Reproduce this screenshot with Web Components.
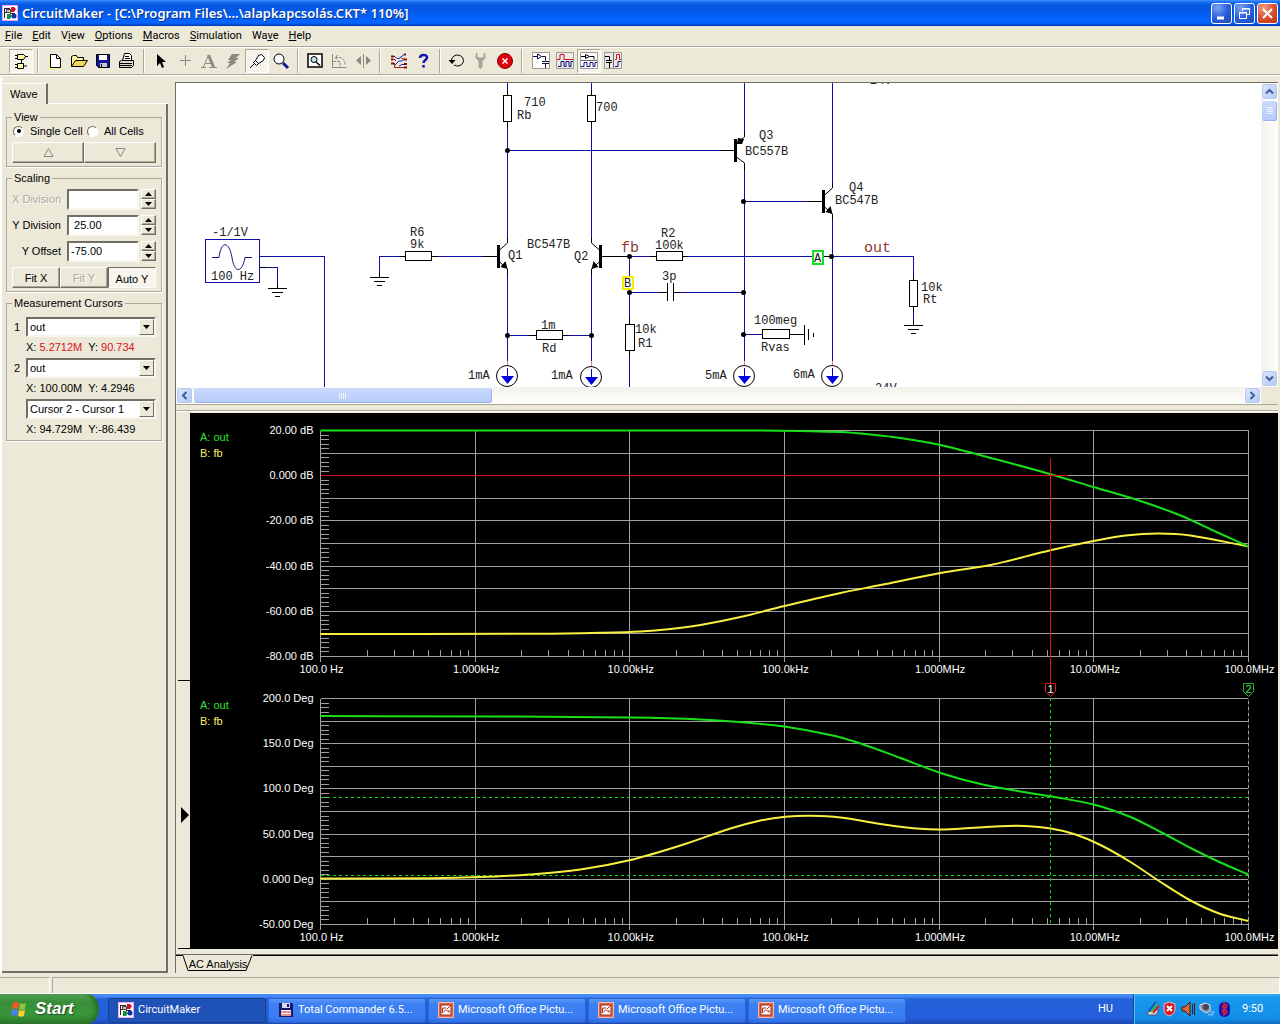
<!DOCTYPE html>
<html lang="en">
<head>
<meta charset="utf-8">
<title>CircuitMaker</title>
<style>
html, body { margin: 0; height: 100%; }
body {
  --face: #ece9d8; --shade: #aca899; --dark: #716f64; --lite: #fff;
  --ui: "Liberation Sans", Arial, sans-serif;
  --tahoma: Roboto, "Open Sans", sans-serif;
  background: #ece9d8; font: 11px/14px "Liberation Sans", Arial, sans-serif; color: #000; overflow: hidden;
}
</style>
</head>
<body>
<app-window></app-window>
<script>
const define = (name, html, setup) => {
  const tpl = document.createElement('template');
  tpl.innerHTML = html;
  customElements.define(name, class extends HTMLElement {
    constructor() { super(); this.attachShadow({ mode: 'open' }).append(tpl.content.cloneNode(true)); }
    connectedCallback() { if (setup && !this.ready) { this.ready = true; setup(this, this.shadowRoot); } }
  });
};

const LOGO = `<svg width="16" height="16" viewBox="0 0 16 16"><rect x=".5" y=".5" width="15" height="15" fill="#fff" stroke="#f6a6e6"/><path d="M2.500 3v10M2 3.500h6M2 7.500h3M5 13.500h3" fill="none" stroke="#222"/><path d="M4.500 4.500h4v3h-4z" fill="#c8c8c8" stroke="#444"/><path d="M9 2h3l2 2-2 3H9z" fill="#d01030"/><path d="M5 9h3l2 2-2 3H5z" fill="#109040"/><circle cx="12" cy="11" r="2.500" fill="#1030a0"/><path d="M8 8.500h5" stroke="#222"/></svg>`;

/* ---------- title bar ---------- */
define('caption-button', `<style>
:host{display:block}
button{display:grid;place-items:center;box-sizing:border-box;width:21px;height:21px;padding:0;border:1px solid #fff;border-radius:3px;background:radial-gradient(circle at 30% 20%,#7ea4f4,#2a5fdc 50%,#1b49b8)}
:host([kind=close]) button{background:radial-gradient(circle at 30% 20%,#f0a088,#dc5030 50%,#b83410)}
::slotted(svg){display:block}
</style><button type="button"><slot></slot></button>`, (h, r) => r.querySelector('button').setAttribute('aria-label', h.getAttribute('kind')));

define('title-bar', `<style>
:host{display:flex;align-items:center;gap:4px;height:26px;padding:0 2px;box-sizing:border-box;background:linear-gradient(#3c96ff,#1a6ef2 2px,#0457e0 5px,#0458e6 10px,#0462fa 18px,#0566ff 23px,#0046c8 25px,#003ab0)}
h1{flex:1;margin:0;font:600 13px/20px "Noto Sans","Open Sans",sans-serif;color:#fff;text-shadow:1px 1px 0 #0a2f84;white-space:nowrap}
div{display:flex;gap:2px}
svg{display:block}
</style>${LOGO}<h1><slot></slot></h1><div>
<caption-button kind="minimize"><svg width="17" height="17"><path d="M4 13h7" stroke="#fff" stroke-width="3"/></svg></caption-button>
<caption-button kind="restore"><svg width="17" height="17" fill="none" stroke="#fff"><path d="M6.500 6V3.500h7v6H11M6 4h8M3.500 7.500h7v6h-7zM3 8h8"/></svg></caption-button>
<caption-button kind="close"><svg width="17" height="17"><path d="M4 4l9 9M13 4l-9 9" stroke="#fff" stroke-width="2"/></svg></caption-button></div>`);

/* ---------- menu ---------- */
define('menu-bar', `<style>
:host{display:block;border-bottom:1px solid var(--shade)}
nav{display:flex;gap:10px;height:20px;padding:0 5px;align-items:center}
button{border:0;background:none;padding:0;font:11px/16px var(--tahoma);color:#000}
u{text-underline-offset:1px}
</style><nav><button><u>F</u>ile</button><button><u>E</u>dit</button><button>V<u>i</u>ew</button><button><u>O</u>ptions</button><button><u>M</u>acros</button><button><u>S</u>imulation</button><button>Wa<u>v</u>e</button><button><u>H</u>elp</button></nav>`);

/* ---------- tool bar ---------- */
define('tool-button', `<style>
:host{display:block}
button{display:grid;place-items:center;box-sizing:border-box;width:24px;height:24px;padding:0;border:1px solid transparent;background:none}
:host([pressed]) button{border-color:var(--shade) #fff #fff var(--shade);background:#f6f4ec}
::slotted(svg){display:block}
</style><button type="button"><slot></slot></button>`, (h, r) => r.querySelector('button').setAttribute('aria-label', h.getAttribute('name')));

const ic = (name, body, pressed = '') => `<tool-button name="${name}" ${pressed}><svg width="20" height="20" viewBox="0 0 20 20" fill="none" stroke="#000">${body}</svg></tool-button>`;
const sep = '<i></i>';
define('tool-bar', `<style>
:host{display:flex;align-items:center;height:26px;padding:0 9px;border-top:1px solid #fff;border-bottom:1px solid var(--shade);box-shadow:0 1px #fff}
i{width:1px;height:24px;margin:0 5px 0 4px;background:var(--shade);box-shadow:1px 0 #fff;flex:none}
i.wide{margin-right:7px}
svg{display:block}
</style>`
+ ic('Digital', `<path d="M6.500 3.500h6l2 2-2 3h-6zM6.500 12.500h6v5h-6z" fill="#fff9a8"/><path d="M4 4.500h3M4 7.500h3M14 5.500h3M4 13.500h3M4 16.500h3M12 15h4M10.500 9v3"/>`, 'pressed') + sep
+ ic('New', `<path d="M5.500 3.500h6l4 4v9h-10z" fill="#fff"/><path d="M11.500 3.500v4h4"/><path d="M3.500 5v12.500h12" stroke="#f8f480"/>`)
+ ic('Open', `<path d="M2.500 15.500v-10l2-1h3l1 2h6v3" fill="#fff59a"/><path d="M2.500 15.500l4-6h12l-4 6z" fill="#efd95a"/>`)
+ ic('Save', `<path d="M3.500 3.500h13v13h-11l-2-2z" fill="#1414a0"/><path d="M6 4h8v5H6z" fill="#fff" stroke="none"/><path d="M7 12h7v4H7z" fill="#c8c8c8" stroke="none"/><path d="M8.500 13v3"/>`)
+ ic('Print', `<path d="M5.500 9.500l2-7h5l2 2v5" fill="#fff"/><path d="M8 5.500h4M8 7.500h5"/><path d="M2.500 10.500l2-1h12v5l-2 2h-12z" fill="#d8d5c8"/><path d="M2 12.500h13M2 14.500h13"/>`) + sep
+ ic('Select', `<path d="M6 3l9 8H11l2 5-2 1-2-5-3 3z" fill="#000" stroke="none"/>`)
+ ic('Wire', `<path d="M10.500 4v11M5 9.500h11" stroke="#8c8a80"/>`)
+ ic('Text', `<path d="M2 16.500h5M10 16.500h8M4.500 16l5-12M6.500 12.500h6" stroke="#8c8a80"/><path d="M9.500 4l5 12" stroke="#8c8a80" stroke-width="3"/>`)
+ ic('Delete', `<path d="M9 3h8l-4 4h3L11 11h3L3 18l4-6H4l4-3H5z" fill="#8c8a80" stroke="none"/>`)
+ ic('Probe', `<path d="M8.500 9.500l3-5 3-1 3 3-1 3-5 3z" fill="#fff"/><path d="M3 17l5-5M6.500 11.500l2-2 3 3-2 2z"/>`, 'pressed')
+ ic('Zoom', `<circle cx="8" cy="8" r="5" fill="#f8fbff"/><path d="M12 12l5 5" stroke="#1414a0" stroke-width="3"/>`) + sep
+ ic('Fit', `<path d="M3 3h14v13H3z" fill="#fff" stroke-width="1.500"/><circle cx="9" cy="8.500" r="3" fill="#bfe0e0"/><path d="M11 11l4 3.500" stroke-width="1.500"/>`)
+ ic('Rotate', `<path d="M3.500 3v13.500h14" stroke="#8c8a80"/><path d="M6 6.500h4c4 0 6 3 6 7M9 4L6 6.500 9 9M4 10.500h7v6" stroke="#8c8a80" stroke-dasharray="3 1"/>`)
+ ic('Mirror', `<path d="M10.500 3v14" stroke="#8c8a80"/><path d="M8 5v9L3 9.500zM13 5v9l5-4.500z" fill="#8c8a80" stroke="none"/>`) + '<i class="wide"></i>'
+ ic('Netlist', `<path d="M3 5.500h3l2 2h2l5-4h2M6 14l4-4h3l2-1.500h2M10 15l3-1.500h4" stroke="#2020c0"/><path d="M3 8.500h3l1 1.500M3 12.500h3M5.500 12v4.500H17M12 7l4 1.500" stroke="#b01818"/><path d="M2 5.500h3M2 8.500h2M2 12.500h3M15 3.500h2M15 8.500h3M15 13h3M15 16.500h3" stroke="#801010" stroke-width="2"/>`)
+ ic('Help', `<path d="M7 7c0-4 7-4 7-.500C14 9 10.500 9 10.500 12M10.500 14v2.500" stroke="#1414b8" stroke-width="2.500"/>`) + sep
+ ic('Undo', `<path d="M4.500 9a6 5.500 0 1 1 2.500 5"/><path d="M1.500 9h7L5 13z" fill="#000" stroke="none"/>`)
+ ic('Options', `<path d="M6 2L5 4v3l3 3v6l1.500 1.500L11 16v-6l3-3V4l-1-2v4l-2 1H8L6 6z" fill="#a8a598" stroke="#a8a598"/>`)
+ ic('Stop', `<circle cx="10" cy="10" r="7.500" fill="#e00010" stroke="#800"/><path d="M7.500 7.500l5 5M12.500 7.500l-5 5" stroke="#fff" stroke-width="1.500"/>`) + '<i class="wide"></i>'
+ ic('Schematic', `<path d="M1.500 1.500h17v16h-17z" fill="#fff" stroke="#999"/><path d="M2 5.500h4M6.500 3v5l4-2.500zM11 5.500h3.500v4M11 10.500h7M11 12.500h7M14.500 13v4" stroke="#101040"/>`)
+ ic('Waveforms', `<path d="M1.500 1.500h17v16h-17z" fill="#ece9e8" stroke="#999"/><path d="M2 8.500h3v-5h4v5h9" stroke="#d01010"/><path d="M3 15.500h3v-5h3v5h2v-5h3v5h2v-5h2" stroke="#101070"/>`)
+ ic('Split horizontal', `<path d="M1.500 1.500h17v16h-17z" fill="#fff" stroke="#999"/><path d="M2 9.500h16" stroke="#666"/><path d="M2 5.500h4M6.500 3.500v4l4-2zM11 5.500h4v3"/><path d="M2 15.500h3v-4h3v4h3v-4h3v4h2v-4h2" stroke="#101070"/>`, 'pressed')
+ ic('Split vertical', `<path d="M1.500 1.500h17v16h-17z" fill="#ece9e8" stroke="#999"/><path d="M10.500 2v15" stroke="#666"/><path d="M2 5.500h4.500v4M3 9.500h6M3 11.500h6M6.500 12v5"/><path d="M12 8.500h1.500v-5h3v5H18" stroke="#d01010"/><path d="M12 15.500h3v-5h3" stroke="#101070"/>`));

/* ---------- side panel ---------- */
const BTN = `button{box-sizing:border-box;padding:0;border:1px solid;border-color:#fff var(--dark) var(--dark) #fff;box-shadow:inset -1px -1px var(--shade);background:var(--face);font:11px/14px var(--ui);color:#000}
button svg{display:block;margin:auto}`;
define('group-box', `<style>
:host{display:block}
fieldset{margin:0;padding:0 5px 3px;min-width:0;border:1px solid var(--shade);box-shadow:1px 1px #fff}
legend{padding:0 2px;font:11px/14px var(--ui)}
</style><fieldset><legend></legend><slot></slot></fieldset>`, (h, r) => r.querySelector('legend').textContent = h.getAttribute('caption'));

define('spin-field', `<style>${BTN}
:host{display:flex;align-items:center;height:20px;margin-bottom:6px}
label{flex:1;min-width:0;text-align:right;padding-right:6px;white-space:nowrap}
:host([disabled]) label{color:var(--shade);text-shadow:1px 1px #fff}
input{flex:none;box-sizing:border-box;width:72px;height:21px;padding:0 2px;border:2px solid;border-color:var(--dark) #f8f7f0 #f8f7f0 var(--dark);background:#fff;font:11px/14px var(--ui)}
div{display:flex;flex:none;flex-direction:column;margin-left:2px}
button{width:15px;height:10px}
</style><label for="v"></label><input id="v" type="text"><div><button type="button" aria-label="increase"><svg width="8" height="4"><path d="M0 4l3.500-4L7 4z"/></svg></button><button type="button" aria-label="decrease"><svg width="8" height="4"><path d="M0 0h7L3.500 4z"/></svg></button></div>`,
(h, r) => { r.querySelector('label').textContent = h.getAttribute('label'); const i = r.querySelector('input'); i.value = h.getAttribute('value') || ''; i.disabled = h.hasAttribute('disabled'); });

define('cursor-readout', `<style>
:host{display:grid;grid-template-columns:14px 1fr}
span.s{position:relative;display:block}
label{padding-left:2px;line-height:20px}
select{appearance:none;width:100%;height:20px;box-sizing:border-box;border:2px solid;border-color:var(--dark) #f8f7f0 #f8f7f0 var(--dark);background:#fff;border-radius:0;padding:0 2px;margin:0;font:11px/14px var(--ui);color:#000;display:block}
b{position:absolute;right:2px;top:2px;width:15px;height:16px;box-sizing:border-box;border:1px solid;border-color:#fff var(--dark) var(--dark) #fff;background:var(--face);display:grid;place-items:center;pointer-events:none}
p{grid-column:2;margin:0;line-height:16px;padding-top:2px;white-space:pre}
:host([hot]) em{color:#d81020}
em{font-style:normal}
</style><label for="c"></label><span class="s"><select id="c"><option></option></select><b><svg width="7" height="4"><path d="M0 0h7L3.500 4z"/></svg></b></span><p>X: <em id="x"></em>  Y:<em id="y"></em></p>`,
(h, r) => {
  const l = r.querySelector('label'), s = r.querySelector('select');
  l.textContent = h.getAttribute('n') || ''; if (!h.hasAttribute('n')) s.setAttribute('aria-label', 'Difference');
  r.querySelector('option').textContent = h.getAttribute('source');
  r.querySelector('#x').textContent = h.getAttribute('x'); r.querySelector('#y').textContent = h.getAttribute('y');
});

define('wave-panel', `<style>${BTN}
:host{display:flex;flex-direction:column;box-sizing:border-box;width:168px;padding-top:6px;border-left:2px solid #fff}
.tabs{display:flex;height:21px}
.tab{width:46px;box-sizing:border-box;padding:3px 0 0 8px;border-right:2px solid var(--dark);border-top:1px solid #fff}
.rest{flex:1;border-bottom:1px solid #fff}
.page{flex:1;display:flex;flex-direction:column;gap:4px;padding:6px 4px 0;border-right:2px solid var(--dark);border-bottom:2px solid var(--dark)}
.radios{display:grid;grid-template-columns:74px 1fr;height:14px;align-items:center;padding:0 0 4px 1px}
.radios label{display:flex;align-items:center;gap:6px;white-space:nowrap}
input[type=radio]{appearance:none;flex:none;margin:0;width:11px;height:11px;box-sizing:border-box;border-radius:50%;border:1px solid;border-color:var(--dark) #fff #fff var(--dark);background:#fff;display:grid;place-items:center}
input[type=radio]:checked::before{content:"";width:4px;height:4px;border-radius:50%;background:#000}
.row{display:flex}
.row button{flex:1;height:21px}
.row button.on{border-color:var(--dark) #fff #fff var(--dark);box-shadow:none;background:#f6f4ec;padding-top:2px}
.row button[disabled]{color:var(--shade);text-shadow:1px 1px #fff}
.fields{padding:4px 0 0}
.cursors{display:flex;flex-direction:column;gap:3px;padding:7px 0 0}
</style><div class="tabs"><div class="tab">Wave</div><div class="rest"></div></div>
<div class="page">
<group-box caption="View"><div class="radios"><label><input type="radio" name="cell" checked>Single Cell</label><label><input type="radio" name="cell">All Cells</label></div>
<div class="row"><button aria-label="Previous"><svg width="11" height="9" fill="none" stroke="#8c8a80"><path d="M1 8.500h9L5.500.500z"/></svg></button><button aria-label="Next"><svg width="11" height="9" fill="none" stroke="#8c8a80"><path d="M1 .500h9l-4.500 8z"/></svg></button></div></group-box>
<group-box caption="Scaling"><div class="fields"><spin-field label="X Division" disabled></spin-field><spin-field label="Y Division" value=" 25.00"></spin-field><spin-field label="Y Offset" value="-75.00"></spin-field></div>
<div class="row"><button>Fit X</button><button disabled>Fit Y</button><button class="on">Auto Y</button></div></group-box>
<group-box caption="Measurement Cursors"><div class="cursors"><cursor-readout n="1" source="out" x="5.2712M" y=" 90.734" hot></cursor-readout><cursor-readout n="2" source="out" x="100.00M" y=" 4.2946"></cursor-readout><cursor-readout source="Cursor 2 - Cursor 1" x="94.729M" y="-86.439"></cursor-readout></div></group-box>
</div>`);

/* ---------- scroll bars ---------- */
define('scroll-bar', `<style>
:host{display:flex;box-sizing:border-box;background:linear-gradient(#f3f1ec,#fefefb)}
:host([dir=v]){flex-direction:column;width:17px;background:linear-gradient(90deg,#f3f1ec,#fefefb)}
:host([dir=h]){height:17px}
button{flex:none;display:grid;place-items:center;box-sizing:border-box;width:17px;height:17px;padding:0;border:1px solid #fff;border-radius:3px;background:linear-gradient(135deg,#dce6fe,#b4c8f6);box-shadow:inset 0 0 0 1px #b8c9f0}
.track{flex:1;display:flex;flex-direction:inherit}
.thumb{display:grid;place-items:center;box-sizing:border-box;border:1px solid #fff;border-radius:3px;background:linear-gradient(#cbdafd,#b6cbfa);box-shadow:inset -1px -1px #98b0e8}
:host([dir=h]) .thumb{width:28.500%}
:host([dir=v]) .thumb{height:22px}
</style><button type="button" aria-label="back"><svg width="9" height="9" fill="none" stroke="#3f5f98" stroke-width="2"></svg></button><div class="track"><div class="thumb"><svg width="8" height="8"></svg></div></div><button type="button" aria-label="forward"><svg width="9" height="9" fill="none" stroke="#3f5f98" stroke-width="2"></svg></button>`,
(h, r) => {
  const s = r.querySelectorAll('svg'), H = h.getAttribute('dir') === 'h';
  s[0].innerHTML = H ? '<path d="M6.500 1L3 4.500 6.500 8"/>' : '<path d="M1 6.500L4.500 3 8 6.500"/>';
  s[2].innerHTML = H ? '<path d="M2.500 1L6 4.500 2.500 8"/>' : '<path d="M1 2.500L4.500 6 8 2.500"/>';
  s[1].innerHTML = H ? '<path d="M.500 1v6M2.500 1v6M4.500 1v6M6.500 1v6" stroke="#eef4fe"/>' : '<path d="M1 .500h6M1 2.500h6M1 4.500h6M1 6.500h6" stroke="#eef4fe"/>';
});

/* ---------- schematic ---------- */
const W = d => `<path class="w" d="${d}"/>`, K = d => `<path class="k" d="${d}"/>`;
const box = (x, y, w, h) => `<rect class="k" x="${x}.5" y="${y}.5" width="${w}" height="${h}" fill="#fff"/>`;
const dot = (x, y) => `<circle cx="${x}.5" cy="${y}.5" r="2.500"/>`;
const T = (x, y, s) => `<text x="${x}" y="${y}">${s}</text>`;
const source = (x, y) => `<path d="M${x}.5 361v5" stroke="#e08080"/><circle cx="${x}" cy="${y}" r="10.500" fill="#fff" stroke="#000"/><path d="M${x}.5 ${y - 8}v8" stroke="#0000e0"/><path d="M${x - 6} ${y}h13l-6.500 8z" fill="#0000e0"/>`;
const gnd = (x, y) => K(`M${x - 9} ${y}.5h19M${x - 5} ${y + 4}.5h11M${x - 2} ${y + 8}.5h5`);
const npn = (x, y, m) => { const d = m ? -1 : 1, bx = x - 9 * d;
  return `<path d="M${bx} ${y - 11}v23" stroke="#000" stroke-width="3"/><path d="M${bx} ${y - 5}L${x} ${y - 13}V${y - 18}M${bx} ${y + 5}L${x} ${y + 13}v6" fill="none" stroke="#000"/><path d="M${x} ${y + 13}L${x - 2 * d} ${y + 5}L${x - 7 * d} ${y + 11}z"/>`; };
define('schematic-view', `<style>
:host{display:block;overflow:hidden;background:#fff;min-width:0}
svg{display:block;width:100%;height:100%}
.w{fill:none;stroke:#1010a8;shape-rendering:crispEdges}
.k{stroke:#000;shape-rendering:crispEdges}
path.k{fill:none}
text{font:12px "Liberation Mono",monospace;fill:#222}
.net text{font-size:15px;fill:#8c3c32}
</style><svg><g transform="translate(-176,-83)">`
+ W('M507.500 83v7M507.500 127v111M507.500 275v86M591.500 83v7M591.500 127v111M591.500 275v86M508 150.500H720M744.500 83v48M744.500 170v191M832.500 83v100M832.500 219v142M744 201.500h63')
+ W('M259 256.500h65.500V387M266 267.500h11.500v16M431 256.500h52M399 256.500h-19.500v16M507 335.500h22M569 335.500h22M629 256.500h21M688 256.500h124M832 256.500h81.500V275M629.500 256v62M629.500 357v30M629 292.500h32M680 292.500h64M744 334.500h18M913.500 313v7')
+ K('M507.500 90v37M591.500 90v37M720 150.500h15M807 201.500h15M259 267.500h7M277.500 283v5M379.500 272v5M399 256.500h39M483 256.500h15M601 256.500h28M529 335.500h40M650 256.500h38M824 256.500h8M913.500 275v38M913.500 320v5M629.500 318v39M661 292.500h6M673 292.500h7M762 334.500h42')
+ box(503, 95, 8, 26) + box(587, 95, 8, 26) + box(405, 251, 26, 9) + box(536, 330, 26, 9) + box(656, 251, 26, 9) + box(909, 280, 8, 26) + box(625, 324, 9, 26) + box(762, 329, 27, 9)
+ `<rect class="w" x="205.500" y="239.500" width="54" height="43"/><path d="M212 257.500h7c2-17 10-17 13 0 2 15 10 17 13 0h7" fill="none" stroke="#14148c"/>`
+ gnd(277, 288) + gnd(379, 277) + gnd(913, 325)
+ K('M667.500 283v18M673.500 283v18M804.500 325v20M808.500 329v11M813.500 333v4')
+ npn(507.500, 256) + npn(591.500, 256, 1) + npn(832.500, 201)
+ `<path d="M735.500 139v23" stroke="#000" stroke-width="3"/><path d="M735 145l9.500-8v-6M735 156l9.500 7v7" fill="none" stroke="#000"/><path d="M737 144l1-6 6 1-2 5z"/>`
+ dot(507, 150) + dot(507, 335) + dot(591, 335) + dot(629, 256) + dot(629, 292) + dot(743, 201) + dot(743, 292) + dot(743, 334) + dot(831, 256)
+ source(507, 376) + source(591, 377) + source(744, 376) + source(832, 376)
+ `<rect x="813" y="251" width="10" height="13" fill="#fff" stroke="#10e020" stroke-width="2"/><rect x="623" y="277" width="10" height="12" fill="#fff" stroke="#f4f000" stroke-width="2"/>`
+ T(814, 262, 'A') + T(624, 287, 'B')
+ T(524, 106, '710') + T(517, 119, 'Rb') + T(596, 111, '700') + T(759, 139, 'Q3') + T(745, 155, 'BC557B') + T(849, 191, 'Q4') + T(835, 204, 'BC547B')
+ T(212, 236, '-1/1V') + T(211, 280, '100 Hz') + T(410, 236, 'R6') + T(410, 248, '9k') + T(508, 259, 'Q1') + T(527, 248, 'BC547B') + T(574, 260, 'Q2')
+ T(661, 237, 'R2') + T(655, 249, '100k') + T(662, 280, '3p') + T(635, 333, '10k') + T(638, 347, 'R1') + T(541, 329, '1m') + T(542, 352, 'Rd')
+ T(754, 324, '100meg') + T(761, 351, 'Rvas') + T(921, 291, '10k') + T(923, 303, 'Rt') + T(468, 379, '1mA') + T(551, 379, '1mA') + T(705, 379, '5mA') + T(793, 378, '6mA')
+ T(870, 84, '24V') + T(875, 392, '24V')
+ `<g class="net">` + T(621, 252, 'fb') + T(864, 252, 'out') + `</g></g></svg>`);

/* ---------- Bode plots ---------- */
const CURVES = {
  mag: { labels: ['20.00 dB', '0.000 dB', '-20.00 dB', '-40.00 dB', '-60.00 dB', '-80.00 dB'],
    a: [[320,17.500],[760,17.500],[800,18],[840,19],[870,21.500],[900,25],[940,32],[1000,47.500],[1051,61.500],[1093,74],[1140,88],[1180,102.500],[1216,119],[1248,133.500]],
    b: [[320,221],[540,220.800],[600,219.800],[640,218.500],[670,216],[700,212],[740,204],[784,193],[840,180],[880,172],[940,160],[990,152],[1051,137],[1093,128],[1125,122.500],[1158,120.500],[1190,122.500],[1248,133.500]] },
  phase: { labels: ['200.0 Deg', '150.0 Deg', '100.0 Deg', '50.00 Deg', '0.000 Deg', '-50.00 Deg'],
    a: [[320,35],[500,35.500],[630,36.500],[700,38.500],[750,42],[784,45.500],[830,54],[860,62.500],[900,77],[940,92],[980,103],[1020,110.500],[1051,115.500],[1093,123.500],[1130,136],[1160,151],[1190,167],[1220,181.500],[1248,193.500]],
    b: [[320,197.500],[430,197.200],[480,196],[530,193.500],[580,188.500],[630,179],[680,164.500],[730,147.500],[760,139.500],[785,135.800],[810,134.800],[840,136.500],[880,143],[920,147.800],[950,148.200],[1015,144.800],[1050,147.500],[1075,153.500],[1100,164],[1130,181],[1160,201],[1190,219.500],[1220,233],[1248,240]] }
};
define('bode-plot', `<style>
:host{display:block;height:268px;background:#000;overflow:hidden}
svg{display:block;width:100%;height:100%}
text{font:11px "Liberation Sans",Arial,sans-serif;fill:#fff}
.g{stroke:#a0a0a0;fill:none;shape-rendering:crispEdges}
.c{fill:none;stroke-width:2}
</style><svg></svg>`, (h, r) => {
  const kind = h.getAttribute('kind'), c = CURVES[kind], svg = r.querySelector('svg');
  const draw = () => {
    const L = 130.5, R = h.clientWidth - 29.5, dec = (R - L) / 6, t = 17.500, H = 226;
    const X = x => L + (x - 320) / 928 * (R - L);
    let g = '', out = '';
    for (let i = 0; i <= 10; i++) g += `M${L} ${t + H * i / 10}H${R}`;
    for (let i = 1; i < 50; i++) g += `M${L} ${t + H * i / 50}h8`;
    for (let i = 0; i <= 6; i++) {
      g += `M${L + dec * i} ${t}v${H + 5}`;
      if (i < 6) for (let k = 2; k < 10; k++) g += `M${L + dec * (i + Math.log10(k))} ${t + H - 7}v7`;
    }
    const spline = p => {
      const q = p.map(([x, y]) => [X(x), y]); let d = `M${q[0]}`;
      const m = q.map((v, i) => { const a = q[Math.max(0, i - 1)], b = q[Math.min(q.length - 1, i + 1)]; return (b[1] - a[1]) / (b[0] - a[0]); });
      for (let i = 1; i < q.length; i++) { const w = (q[i][0] - q[i - 1][0]) / 3; d += `C${q[i-1][0] + w},${q[i-1][1] + m[i-1] * w} ${q[i][0] - w},${q[i][1] - m[i] * w} ${q[i]}`; }
      return d; };
    out += `<path class="g" d="${g}"/>`;
    c.labels.forEach((s, i) => out += `<text x="${L - 7}" y="${t + 3.500 + H * i / 5}" text-anchor="end">${s}</text>`);
    ['100.0 Hz', '1.000kHz', '10.00kHz', '100.0kHz', '1.000MHz', '10.00MHz', '100.0MHz'].forEach((s, i) => out += `<text x="${L + 1 + dec * i}" y="${t + H + 16.500}" text-anchor="middle">${s}</text>`);
    out += `<text x="10" y="28" style="fill:#30e030">A: out</text><text x="10" y="44" style="fill:#f8f060">B: fb</text>`;
    const cx = Math.floor(X(1050)) + .5;
    if (kind === 'phase') out += `<path d="M${L} 116.500H${R}M${L} 194.500H${R}M${cx} 17V243" stroke="#10d810" stroke-dasharray="3 3" shape-rendering="crispEdges"/><path d="M${R} 17V243" stroke="#184018" stroke-dasharray="3 3" shape-rendering="crispEdges"/>`;
    out += `<path class="c" d="${spline(c.b)}" stroke="#f8f040"/><path class="c" d="${spline(c.a)}" stroke="#18e018"/>`;
    if (kind === 'mag') out += `<path d="M${L} 62.500H${cx + 17}M${cx} 45V268" fill="none" stroke="#e01018" shape-rendering="crispEdges"/>`;
    else {
      const pin = (x, n, col, tc) => `<path d="M${x - 5} 2.500h10v8l-5 5-5-5z" fill="#000" stroke="${col}"/><text x="${x}" y="12" text-anchor="middle" style="fill:${tc}">${n}</text>`;
      out += `<path d="M${cx} 0v3" stroke="#e01018"/>` + pin(cx, 1, '#e81828', '#fff') + pin(R, 2, '#20b030', '#40e050');
    }
    svg.innerHTML = out;
  };
  draw(); new ResizeObserver(draw).observe(h);
});

/* ---------- analysis tab strip and status bar ---------- */
define('sheet-tabs', `<style>
:host{display:flex;height:18px;box-sizing:border-box;margin-top:5px;border-top:1px solid var(--dark)}
i{border-top:1px solid #000}
i.a{width:7px}i.b{flex:1}
button{position:relative;width:70px;height:17px;padding:0;border:0;background:none;font:11px/14px var(--ui);color:#000;white-space:nowrap}
svg{position:absolute;left:0;top:0}
</style><i class="a"></i><button><svg width="70" height="17" fill="none" stroke="#000"><path d="M0 .500l5 15h58l6-15"/></svg>AC Analysis</button><i class="b"></i>`);

define('status-bar', `<style>
:host{display:flex;gap:2px;height:17px;padding:0;border-bottom:1px solid #fff;box-sizing:border-box}
div{border-top:1px solid var(--shade);border-right:1px solid #fff;width:49px}
div+div{width:auto;flex:1;border-left:1px solid var(--shade)}
</style><div></div><div></div>`);

/* ---------- task bar ---------- */
define('task-button', `<style>
:host{display:block;width:160px;padding-right:2px;box-sizing:border-box}
button{display:flex;align-items:center;gap:4px;width:100%;height:25px;box-sizing:border-box;padding:0 9px;border:1px solid #2a64d8;border-radius:2px;background:linear-gradient(#5a96f8,#3c81f3 5px,#3a7cf0 19px,#2f6ce0);font:11px/16px var(--tahoma);color:#fff;white-space:nowrap}
:host([active]) button{background:#1e52b7;border-color:#173f92}
</style><button type="button"><slot name="icon"></slot><slot></slot></button>`);
const PIC = `<svg slot="icon" width="16" height="16"><rect x=".5" y=".5" width="15" height="15" fill="#d86850" stroke="#f8b8a8"/><rect x="3" y="3" width="10" height="10" fill="#fff" stroke="#9c2818"/><path d="M4.500 11V6H8M5 10.500l3-3 3 3V8M9 7l4-4" fill="none" stroke="#b03018"/></svg>`;
define('task-bar', `<style>
:host{display:flex;align-items:center;height:30px;background:linear-gradient(#3a86f4,#4a90f8 2px,#2462da 5px,#245edb 24px,#1c48ac)}
.start{display:flex;align-items:center;gap:7px;align-self:stretch;width:99px;padding:0 0 0 10px;margin-right:9px;border:0;border-radius:0 12px 12px 0/0 15px 15px 0;background:linear-gradient(#76b476,#4aa04a 3px,#388e38 8px,#3a963a 20px,#2c782c);box-shadow:inset -3px 0 4px #266a26;color:#fff;font:italic bold 17px/20px "Liberation Sans",Arial,sans-serif;text-shadow:1px 1px 1px #1c4a1c}
.tasks{display:flex;flex:1;padding-top:2px}
.lang{color:#fff;font:11px/16px var(--tahoma);margin-right:20px}
.tray{display:flex;align-items:center;gap:2px;align-self:stretch;width:147px;box-sizing:border-box;padding-left:12px;border-left:1px solid #0c4c98;background:linear-gradient(#38b0f4,#1898ec 3px,#128ee8 24px,#0f6cc4);color:#fff;font:11px/16px var(--tahoma);box-shadow:inset 1px 0 #58c0f8}
.tray span{margin-left:6px}
</style><button class="start"><svg width="18" height="18"><path d="M3 3c2-2 4-1 6 0L8 9c-2-1-4-1-6 0z" fill="#f05a28"/><path d="M10 3c2 1 4 1 6 0l-1 6c-2 1-4 1-6 0z" fill="#8cc83c"/><path d="M2 10c2-1 4-1 6 0l-1 6c-2-1-4-1-6 0z" fill="#4a80f0"/><path d="M9 10c2 1 4 1 6 0l-1 6c-2 1-4 1-6 0z" fill="#fcd030"/></svg>Start</button>
<div class="tasks"><task-button active>${LOGO.replace('<svg', '<svg slot="icon"')}CircuitMaker</task-button>
<task-button><svg slot="icon" width="16" height="16"><path d="M1 1h13l1 1v13H1z" fill="#181870"/><path d="M4 1h8v5H4z" fill="#d8d8e8"/><path d="M9 2h2v3H9z" fill="#181870"/><path d="M3 8h10v6H3z" fill="#fff"/><path d="M3 10h10M3 13h10" stroke="#d02020"/></svg>Total Commander 6.5...</task-button>
<task-button>${PIC}Microsoft Office Pictu...</task-button><task-button>${PIC}Microsoft Office Pictu...</task-button><task-button>${PIC}Microsoft Office Pictu...</task-button></div>
<div class="lang">HU</div>
<div class="tray"><svg width="88" height="18">
<path d="M1 13l5-3h7l-3 5H3z" fill="#d8d8e8" stroke="#556"/><path d="M3 11l7-9" stroke="#2040e0" stroke-width="2"/><path d="M5 12l6-9" stroke="#20c040" stroke-width="2"/><path d="M7 13l6-7" stroke="#e02020" stroke-width="2"/>
<path d="M18 4l5-2 6 2v5c0 4-3 6-6 7-3-1-5-3-5-7z" fill="#d81828" stroke="#f0c0c0"/><path d="M21 6l5 5M26 6l-5 5" stroke="#fff" stroke-width="2"/>
<path d="M36 7h3l5-5v14l-5-5h-3z" fill="#e06838" stroke="#401808"/><path d="M46.500 4v10M48.500 3v12" stroke="#222"/>
<path d="M54 5l5-2 5 2v6l-4 2-6-4z" fill="#889" stroke="#dde"/><circle cx="60" cy="7" r="3" fill="#445"/><path d="M62 15c3 0 4-2 4-4M65 16c2-1 3-3 3-5" stroke="#a8d8ff" fill="none"/>
<rect x="73" y="2" width="11" height="15" rx="5" fill="#1818b0"/><path d="M76 6l5 6-3 3V3l3 3-5 6" fill="none" stroke="#e02030" stroke-width="1.500"/></svg><span>9:50</span></div>`);

/* ---------- whole window ---------- */
define('app-window', `<style>
:host{display:flex;flex-direction:column;min-height:100vh;background:var(--face)}
main{flex:1;display:flex;gap:7px;padding:1px 2px 4px 0;border-top:1px solid #fff}
.work{flex:1;min-width:0;display:flex;flex-direction:column;margin-top:5px;border-left:1px solid var(--dark);border-top:1px solid var(--dark)}
.sheet{display:grid;grid-template-columns:1fr 17px;grid-template-rows:304px 17px;border-bottom:1px solid var(--shade)}
.plots{display:flex;margin-top:5px;border-top:1px solid var(--shade);padding:2px 0 0 2px;box-shadow:inset 0 1px #fff}
.rail{width:12px;display:flex;flex-direction:column}
.rail div{height:267px;border-bottom:1px solid #000;display:grid;place-items:center end}
.stack{flex:1;min-width:0}
svg{display:block}
</style>
<title-bar>CircuitMaker - [C:\\Program Files\\...\\alapkapcsolás.CKT* 110%]</title-bar>
<menu-bar></menu-bar>
<tool-bar></tool-bar>
<main><wave-panel></wave-panel>
<div class="work">
<div class="sheet"><schematic-view></schematic-view><scroll-bar dir="v"></scroll-bar><scroll-bar dir="h"></scroll-bar></div>
<div class="plots"><div class="rail"><div></div><div><svg width="10" height="16"><path d="M1 0l8 8-8 8z"/></svg></div></div>
<div class="stack"><bode-plot kind="mag"></bode-plot><bode-plot kind="phase"></bode-plot></div></div>
<sheet-tabs></sheet-tabs>
</div></main>
<status-bar></status-bar>
<task-bar></task-bar>`);
</script>
</body>
</html>
